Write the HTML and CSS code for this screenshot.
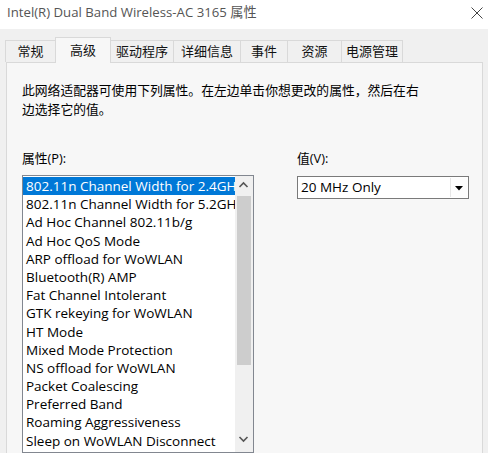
FILE: index.html
```html
<!DOCTYPE html>
<html lang="zh-CN">
<head>
<meta charset="utf-8">
<title>属性</title>
<link rel="stylesheet" href="styles.css">
</head>
<body>
<div class="window">
  <div class="titlebar">
    <span class="title">Intel(R) Dual Band Wireless-AC 3165 属性</span>
    <svg class="close" width="12" height="12" viewBox="0 0 12 12"><path d="M0.5 0.5 L11.5 11.5 M11.5 0.5 L0.5 11.5" stroke="#444" stroke-width="1" fill="none"/></svg>
  </div>
  <div class="tabs">
    <div class="tab t1">常规</div>
    <div class="tab t2 active">高级</div>
    <div class="tab t3">驱动程序</div>
    <div class="tab t4">详细信息</div>
    <div class="tab t5">事件</div>
    <div class="tab t6">资源</div>
    <div class="tab t7">电源管理</div>
  </div>
  <div class="panel">
    <p class="desc">此网络适配器可使用下列属性。在左边单击你想更改的属性，然后在右<br>边选择它的值。</p>
    <div class="fields">
      <div class="col-left">
        <div class="label">属性(P):</div>
        <div class="listbox">
          <ul class="items">
            <li class="selected">802.11n Channel Width for 2.4GHz</li>
            <li>802.11n Channel Width for 5.2GHz</li>
            <li>Ad Hoc Channel 802.11b/g</li>
            <li>Ad Hoc QoS Mode</li>
            <li>ARP offload for WoWLAN</li>
            <li>Bluetooth(R) AMP</li>
            <li>Fat Channel Intolerant</li>
            <li>GTK rekeying for WoWLAN</li>
            <li>HT Mode</li>
            <li>Mixed Mode Protection</li>
            <li>NS offload for WoWLAN</li>
            <li>Packet Coalescing</li>
            <li>Preferred Band</li>
            <li>Roaming Aggressiveness</li>
            <li>Sleep on WoWLAN Disconnect</li>
          </ul>
          <div class="scrollbar">
            <svg class="arrow" width="17" height="17" viewBox="0 0 17 17"><path d="M4.5 10 L8.5 6 L12.5 10" stroke="#555" stroke-width="1.6" fill="none"/></svg>
            <div class="track"><div class="thumb"></div></div>
            <svg class="arrow" width="17" height="17" viewBox="0 0 17 17"><path d="M4.5 7 L8.5 11 L12.5 7" stroke="#555" stroke-width="1.6" fill="none"/></svg>
          </div>
        </div>
      </div>
      <div class="col-right">
        <div class="label">值(V):</div>
        <div class="combo">
          <span class="combo-text">20 MHz Only</span>
          <span class="combo-btn"><svg width="8" height="5" viewBox="0 0 8 5"><path d="M0 0 L8 0 L4 4.5 Z" fill="#000"/></svg></span>
        </div>
      </div>
    </div>
  </div>
</div>
</body>
</html>
```
FILE: styles.css
```css
* { box-sizing: border-box; }
html, body {
  margin: 0;
  padding: 0;
}
body {
  width: 488px;
  height: 453px;
  overflow: hidden;
  background: #f0f0f0;
  font-family: "Open Sans", "Noto Sans CJK SC", sans-serif;
  font-size: 13px;
  color: #000;
}
.window {
  width: 488px;
  height: 453px;
  display: flex;
  flex-direction: column;
}
.titlebar {
  height: 30px;
  background: #fff;
  display: flex;
  align-items: flex-start;
  justify-content: space-between;
  padding: 0 5px 0 7px;
}
.title {
  font-size: 13.2px;
  line-height: 24px;
  color: #555;
}
.close {
  margin-top: 7px;
}
.tabs {
  display: flex;
  align-items: flex-end;
  padding: 7px 0 0 5px;
  height: 33px;
  position: relative;
  z-index: 1;
}
.tab {
  height: 22px;
  line-height: 21px;
  text-align: center;
  background: #f0f0f0;
  border: 1px solid #d9d9d9;
  border-bottom: none;
  margin-right: -1px;
  font-size: 13px;
  color: #111;
}
.tab.active {
  height: 26px;
  line-height: 25px;
  background: #f7f7f7;
  border-color: #d9d9d9;
  margin-bottom: -1px;
  padding-bottom: 3px;
  position: relative;
  z-index: 2;
}
.t1 { width: 51px; }
.t2 { width: 56px; }
.t3 { width: 64px; }
.t4 { width: 68px; }
.t5 { width: 48px; }
.t6 { width: 55px; }
.t7 { width: 62px; }
.panel {
  flex: 1;
  margin: 0 5px 0 6px;
  border: 1px solid #d9d9d9;
  border-bottom: none;
  background: #f7f7f7;
  padding: 18px 0 0 15px;
}
.desc {
  margin: 0;
  line-height: 19px;
  font-size: 12.8px;
}
.fields {
  display: flex;
  gap: 43px;
  margin-top: 30px;
}
.label {
  line-height: 18px;
  height: 18px;
  font-size: 12.8px;
}
.col-left {
  width: 232px;
}
.listbox {
  margin-top: 8px;
  height: 278px;
  border: 1px solid #828790;
  background: #fff;
  display: flex;
}
.items {
  list-style: none;
  margin: 0;
  padding: 1px 0 0 0;
  flex: 1;
  overflow: hidden;
}
.items li {
  height: 18.2px;
  line-height: 18.2px;
  padding-left: 3px;
  white-space: nowrap;
  overflow: hidden;
  font-size: 13.5px;
  color: #000;
}
.items li.selected {
  background: #0078d7;
  color: #fff;
}
.scrollbar {
  width: 18px;
  background: #f0f0f0;
  display: flex;
  flex-direction: column;
  padding-top: 1px;
}
.scrollbar .arrow {
  flex: none;
  display: block;
}
.track {
  height: 236px;
  padding: 2px 2px 0 2px;
}
.thumb {
  height: 169px;
  background: #cdcdcd;
}
.col-right {
  width: 172px;
}
.combo {
  margin-top: 9px;
  height: 23px;
  border: 1px solid #7a7a7a;
  background: #fff;
  display: flex;
  align-items: center;
  justify-content: space-between;
}
.combo-text {
  padding-left: 3px;
  font-size: 13.5px;
  line-height: 21px;
}
.combo-btn {
  width: 17px;
  height: 19px;
  margin-right: 1px;
  display: flex;
  align-items: center;
  justify-content: center;
  background: #fdfdfd;
  border-left: 1px solid #e6e6e6;
}
.combo-btn svg { display: block; margin-top: 2px; }
```
